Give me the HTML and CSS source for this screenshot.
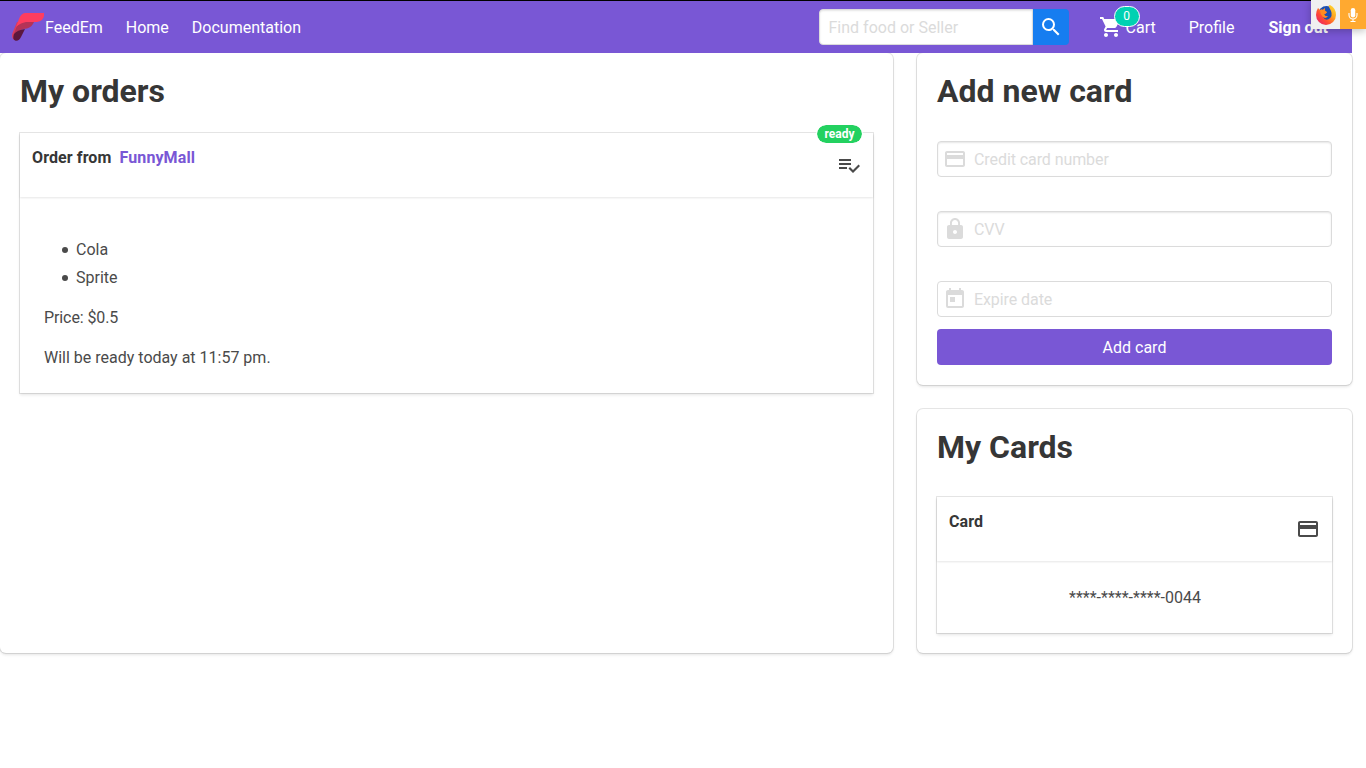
FILE: index.html
```html
<!DOCTYPE html>
<html lang="en">
<head>
<meta charset="utf-8">
<title>FeedEm</title>
<link rel="stylesheet" href="styles.css">
</head>
<body>
<div class="page">
  <nav class="navbar">
    <a class="brand">
      <svg class="logo" width="33" height="30" viewBox="0 0 33 30">
        <path d="M5 10L0.500 21Q-1 26 2 28L6 27L10 16L14 10Z" fill="#d83b5c"/>
        <path d="M5 14Q9 10 14 10H22Q20 15 15 16.500Q7 17 3 21L1 24Z" fill="#b43357"/>
        <path d="M13 17Q5 18 2 22Q0 27 3 28.500Q7 29.500 9 25Z" fill="#5b173d"/>
        <path d="M13 1H32V4Q31 9 25 10H14Q8 11 4 15L7 7Q9 1.500 13 1Z" fill="#ff3d5f"/>
      </svg>
      <span class="text">FeedEm</span>
    </a>
    <a class="nav-item text">Home</a>
    <a class="nav-item text">Documentation</a>
    <form class="search">
      <input class="search-input" type="text" placeholder="Find food or Seller">
      <button class="search-button" type="button" aria-label="Search">
        <svg width="24" height="24" viewBox="0 0 24 24"><path d="M15.500 14h-.79l-.28-.27A6.470 6.470 0 0 0 16 9.500 6.500 6.500 0 1 0 9.500 16c1.610 0 3.090-.59 4.230-1.570l.27.28v.79l5 4.990L20.490 19l-4.990-5zm-6 0C7.010 14 5 11.990 5 9.500S7.010 5 9.500 5 14 7.010 14 9.500 11.990 14 9.500 14z"/></svg>
      </button>
    </form>
    <a class="cart">
      <svg width="24" height="24" viewBox="0 0 24 24"><path d="M7 18c-1.100 0-1.990.9-1.990 2S5.900 22 7 22s2-.9 2-2-.9-2-2-2zM1 2v2h2l3.600 7.590-1.350 2.450c-.16.28-.25.61-.25.96 0 1.100.9 2 2 2h12v-2H7.420c-.14 0-.25-.11-.25-.25l.03-.12.9-1.630h7.450c.75 0 1.410-.41 1.750-1.030l3.580-6.490A1 1 0 0 0 20 4H5.210l-.94-2H1zm16 16c-1.100 0-1.990.9-1.990 2s.89 2 1.990 2 2-.9 2-2-.9-2-2-2z"/></svg>
      <span class="cart-label text">Cart</span>
      <span class="cart-count">0</span>
    </a>
    <a class="nav-item profile text">Profile</a>
    <a class="nav-item sign-out text">Sign out</a>
  </nav>

  <main class="columns">
    <section class="box orders">
      <h1 class="title">My orders</h1>
      <article class="card">
        <span class="tag">ready</span>
        <header class="card-header">
          <p class="card-title">Order from <a class="seller">FunnyMall</a></p>
          <span class="card-icon">
            <svg width="24" height="24" viewBox="0 0 24 24"><path d="M14 10H2v2h12v-2zm0-4H2v2h12V6zM2 16h8v-2H2v2zm19.500-4.500L23 13l-6.990 7-4.510-4.500L13 14l3.010 3 5.490-5.500z"/></svg>
          </span>
        </header>
        <div class="card-content">
          <ul class="items">
            <li>Cola</li>
            <li>Sprite</li>
          </ul>
          <p class="line price">Price: $0.5</p>
          <p class="line">Will be ready today at 11:57 pm.</p>
        </div>
      </article>
    </section>

    <div class="side">
      <section class="box">
        <h1 class="title">Add new card</h1>
        <form class="card-form">
          <label class="field">
            <svg width="24" height="24" viewBox="0 0 24 24"><path d="M20 4H4c-1.110 0-1.990.89-1.990 2L2 18c0 1.110.89 2 2 2h16c1.110 0 2-.89 2-2V6c0-1.110-.89-2-2-2zm0 14H4v-6h16v6zm0-10H4V6h16v2z"/></svg>
            <input type="text" placeholder="Credit card number">
          </label>
          <label class="field">
            <svg width="24" height="24" viewBox="0 0 24 24"><path d="M18 8h-1V6c0-2.760-2.240-5-5-5S7 3.240 7 6v2H6c-1.100 0-2 .9-2 2v10c0 1.100.9 2 2 2h12c1.100 0 2-.9 2-2V10c0-1.100-.9-2-2-2zm-6 9c-1.100 0-2-.9-2-2s.9-2 2-2 2 .9 2 2-.9 2-2 2zm3.100-9H8.900V6c0-1.710 1.390-3.100 3.100-3.100s3.100 1.390 3.100 3.100v2z"/></svg>
            <input type="text" placeholder="CVV">
          </label>
          <label class="field flat">
            <svg width="24" height="24" viewBox="0 0 24 24"><path d="M19 3h-1V1h-2v2H8V1H6v2H5c-1.110 0-1.990.9-1.990 2L3 19a2 2 0 0 0 2 2h14c1.100 0 2-.9 2-2V5c0-1.100-.9-2-2-2zm0 16H5V8h14v11zM7 10h5v5H7z"/></svg>
            <input type="text" placeholder="Expire date">
          </label>
          <button class="submit" type="button">Add card</button>
        </form>
      </section>

      <section class="box">
        <h1 class="title">My Cards</h1>
        <article class="card saved">
          <header class="card-header">
            <p class="card-title">Card</p>
            <span class="card-icon">
              <svg width="24" height="24" viewBox="0 0 24 24"><path d="M20 4H4c-1.110 0-1.990.89-1.990 2L2 18c0 1.110.89 2 2 2h16c1.110 0 2-.89 2-2V6c0-1.110-.89-2-2-2zm0 14H4v-6h16v6zm0-10H4V6h16v2z"/></svg>
            </span>
          </header>
          <div class="card-content number">****-****-****-0044</div>
        </article>
      </section>
    </div>
  </main>
</div>

<div class="media-indicator">
  <span class="browser">
    <svg width="22" height="22" viewBox="0 0 22 22">
      <defs>
        <linearGradient id="flame" x1="1" y1="0" x2="0" y2="1">
          <stop offset="0" stop-color="#ffe83a"/>
          <stop offset=".35" stop-color="#ffa51f"/>
          <stop offset=".65" stop-color="#ff4b32"/>
          <stop offset="1" stop-color="#e3157a"/>
        </linearGradient>
      </defs>
      <circle cx="11.500" cy="10.500" r="8.500" fill="#1c4fb0"/>
      <path d="M3 4L5 6Q7 5 8 6L10 4Q9 7 12 8Q11 10 9 10Q10 13 13 12Q11 15 8 13Q10 17 14 15Q18 12 16 7Q15 5 14 3Q13 1 15 1Q21 4 21 11A10 10 0 0 1 1 11Q1 7 3 4Z" fill="url(#flame)"/>
      <path d="M10 4Q9 7 12 8Q11 10 9 10Q10 13 13 12Q11 15 8 13Q5 10 5 6Q7 5 8 6Z" fill="#ff8a20"/>
    </svg>
  </span>
  <span class="mic">
    <svg width="10" height="16" viewBox="0 0 10 16">
      <rect x="2.750" y="1" width="4.500" height="9.500" rx="2.250" fill="#fff"/>
      <path d="M1 6v2a4 4 0 0 0 8 0V6M5 12v2M2.500 14.500h5" fill="none" stroke="#fff" stroke-width="1.100"/>
    </svg>
  </span>
</div>
</body>
</html>
```

FILE: styles.css
```css
* {
  box-sizing: border-box;
}

body {
  min-height: 768px;
  margin: 0;
  border-top: 1px solid #000;
  background: #fff;
  color: #4a4a4a;
  font: 16px/24px Roboto, sans-serif;
}

svg {
  display: block;
  flex: none;
  fill: currentColor;
}

h1, p, ul {
  margin: 0;
}

input, button {
  font: inherit;
}

input::placeholder {
  color: #dbdbdb;
  opacity: 1;
}

.page {
  width: 1352px;
}

.navbar {
  position: relative;
  z-index: 1;
  display: flex;
  align-items: center;
  height: 52px;
  background: #7957d5;
  color: #fff;
}

.text {
  padding-top: 2px;
}

.brand {
  display: flex;
  align-items: center;
  padding: 0 11px 0 12px;
}

.nav-item {
  padding-right: 12px;
  padding-left: 12px;
}

.nav-item + .nav-item {
  padding-left: 11px;
}

.search {
  display: flex;
  margin-left: auto;
}

.search-input {
  width: 214px;
  height: 36px;
  padding: 0 9px;
  border: 1px solid #dbdbdb;
  border-radius: 4px 0 0 4px;
  box-shadow: inset 0 1px 2px rgba(10, 10, 10, .1);
}

.search-button {
  display: flex;
  align-items: center;
  justify-content: center;
  width: 36px;
  height: 36px;
  padding: 0;
  border: 0;
  border-radius: 0 4px 4px 0;
  background: #167df0;
  color: #fff;
}

.cart {
  position: relative;
  display: flex;
  align-items: center;
  margin-left: 30px;
}

.cart-label {
  margin-left: 3px;
}

.cart-count {
  position: absolute;
  left: 15px;
  top: -8px;
  width: 26px;
  height: 21px;
  border: 1px solid #fff;
  border-radius: 11px;
  background: #00d1b2;
  font-size: 12px;
  line-height: 19px;
  text-align: center;
}

.profile {
  margin-left: 21px;
}

.sign-out {
  margin: 0 12px 0 11px;
  font-weight: 700;
}

.columns {
  display: flex;
  gap: 24px;
}

.box {
  padding: 20px;
  border-radius: 6px;
  background: #fff;
  box-shadow: 0 2px 3px rgba(10, 10, 10, .1), 0 0 0 1px rgba(10, 10, 10, .1);
}

.orders {
  width: 893px;
}

.side {
  display: flex;
  flex: 1;
  flex-direction: column;
  gap: 24px;
}

.title {
  color: #363636;
  font-size: 32px;
  font-weight: 700;
  line-height: 36px;
}

.card {
  position: relative;
  margin-top: 24px;
  box-shadow: 0 2px 3px rgba(10, 10, 10, .1), 0 0 0 1px rgba(10, 10, 10, .1);
}

.saved {
  margin-top: 32px;
}

.tag {
  position: absolute;
  top: -8px;
  right: 11px;
  width: 45px;
  height: 18px;
  border-radius: 9px;
  outline: 1px solid #fff;
  background: #23d160;
  color: #fff;
  font-size: 12px;
  font-weight: 700;
  line-height: 18px;
  text-align: center;
}

.card-header {
  display: flex;
  justify-content: space-between;
  height: 64px;
  padding: 12px;
  box-shadow: 0 1px 2px rgba(10, 10, 10, .1);
}

.card-title {
  padding-top: 1px;
  color: #363636;
  font-weight: 700;
  letter-spacing: .1px;
}

.seller {
  margin-left: 4px;
  color: #7957d5;
}

.card-icon {
  padding-top: 8px;
}

.card-content {
  padding: 25px 24px 23px;
}

.items {
  margin-top: 16px;
  padding: 0;
  list-style: none;
}

.items li {
  display: flex;
  align-items: center;
  gap: 8px;
  padding-left: 18px;
}

.items li::before {
  width: 6px;
  height: 6px;
  border-radius: 50%;
  background: currentColor;
  content: "";
}

.items li + li {
  margin-top: 4px;
}

.line {
  margin-top: 16px;
}

.price {
  letter-spacing: -.1px;
}

.number {
  padding-left: 25px;
  text-align: center;
}

.card-form {
  display: flex;
  flex-direction: column;
  margin-top: 32px;
}

.field {
  display: flex;
  align-items: center;
  gap: 7px;
  height: 36px;
  margin-bottom: 34px;
  padding: 0 5px;
  border: 1px solid #dbdbdb;
  border-radius: 4px;
  box-shadow: inset 0 1px 2px rgba(10, 10, 10, .1);
  color: #dbdbdb;
}

.field input {
  flex: 1;
  min-width: 0;
  padding: 2px 0 0;
  border: 0;
  background: transparent;
  letter-spacing: -.08px;
}

.flat {
  margin-bottom: 12px;
  box-shadow: none;
}

.submit {
  height: 36px;
  padding: 2px 0 0;
  border: 0;
  border-radius: 4px;
  background: #7957d5;
  color: #fff;
}

.media-indicator {
  position: absolute;
  z-index: 2;
  top: 0;
  right: 0;
  display: flex;
  width: 55px;
  height: 29px;
  box-shadow: 0 2px 8px rgba(0, 0, 0, .25);
}

.browser,
.mic {
  display: flex;
  align-items: center;
  justify-content: center;
}

.browser {
  width: 29px;
  background: #f0f0f0;
}

.mic {
  width: 26px;
  background: #ffa930;
}
```
